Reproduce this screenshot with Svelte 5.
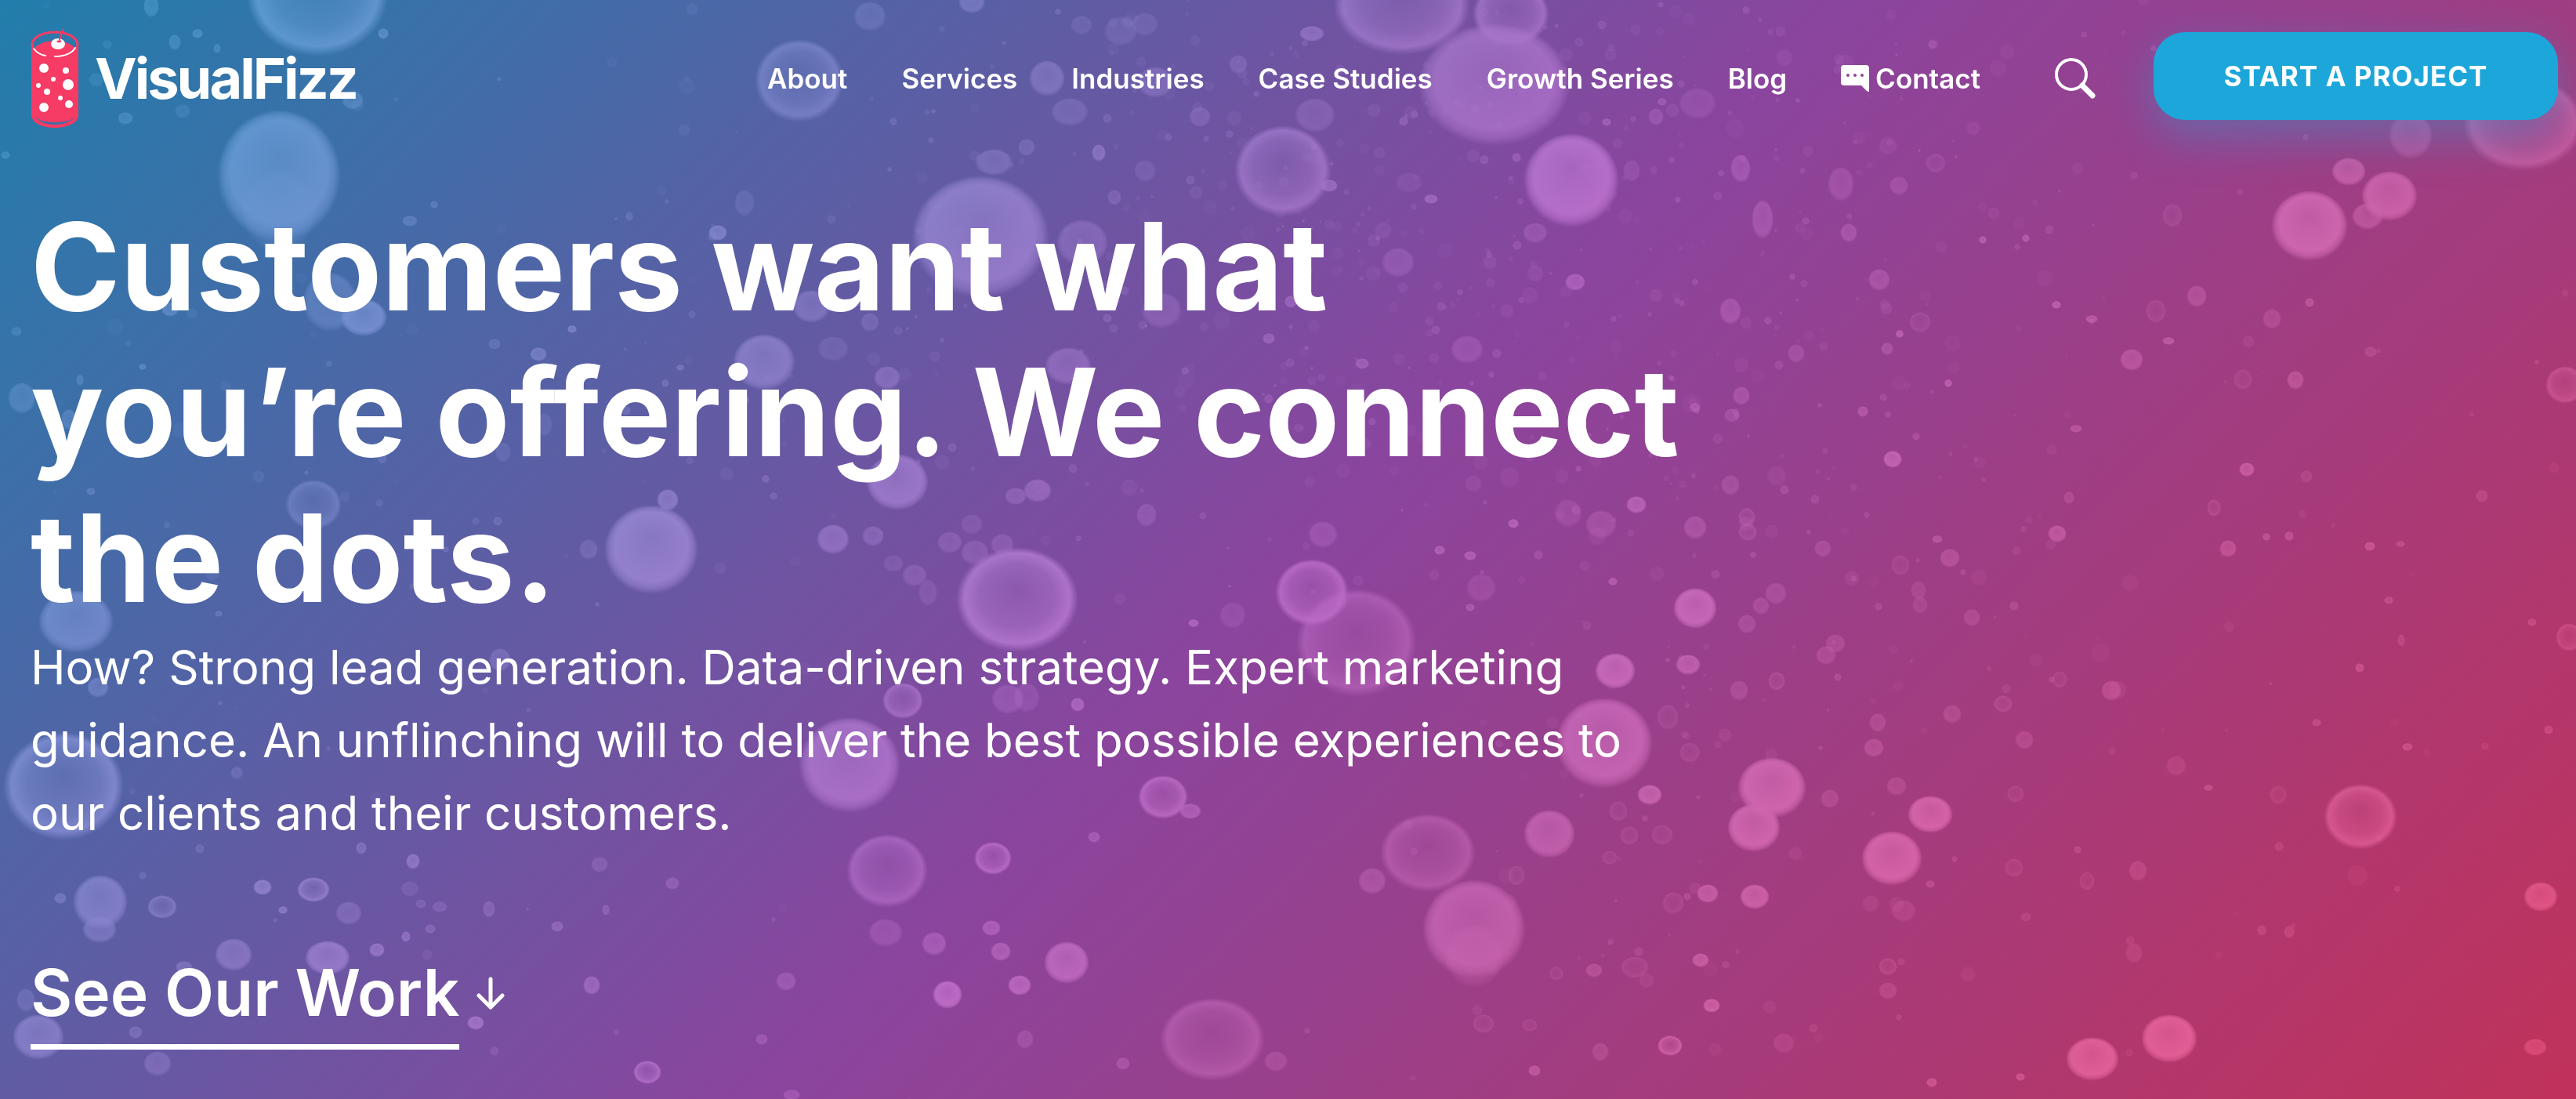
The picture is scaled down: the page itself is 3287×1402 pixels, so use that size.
<script>
    const navItems = ["About", "Services", "Industries", "Case Studies", "Growth Series", "Blog"];

    // x, y, rx, ry, strength
    const solid = [
        [356, 224, 79, 84, 0.9], [356, 270, 48, 52, 0.3], [193, 8, 10, 14, 0.5], [223, 54, 8, 10, 0.5], [252, 43, 7, 6, 0.6],
        [277, 62, 5, 6, 0.5], [160, 151, 10, 8, 0.5], [233, 142, 10, 9, 0.3], [489, 43, 7, 7, 0.7],
        [450, 128, 14, 12, 0.5], [123, 102, 10, 9, 0.3], [137, 57, 6, 6, 0.3], [7, 198, 6, 5, 0.5],
        [421, 385, 35, 38, 0.5], [464, 405, 30, 24, 0.9], [975, 462, 40, 36, 0.8], [1035, 391, 24, 21, 0.6],
        [831, 701, 60, 57, 1], [852, 638, 14, 14, 0.8], [1063, 688, 21, 19, 0.7], [97, 793, 48, 40, 0.8],
        [916, 297, 12, 10, 0.8], [730, 420, 6, 5, 0.8], [687, 452, 11, 9, 0.7], [28, 508, 18, 20, 0.5],
        [631, 439, 8, 7, 0.4], [116, 627, 6, 5, 0.5], [21, 423, 7, 6, 0.4], [868, 469, 5, 4, 0.6],
        [182, 468, 5, 4, 0.6], [102, 485, 5, 7, 0.5], [751, 701, 12, 13, 0.4], [217, 395, 11, 9, 0.6],
        [523, 282, 10, 7, 0.5], [554, 261, 5, 5, 0.5], [642, 577, 10, 13, 0.3], [694, 542, 11, 15, 0.3],
        [88, 535, 10, 13, 0.5], [279, 783, 5, 4, 0.5], [950, 259, 13, 17, 0.3], [1063, 445, 20, 16, 0.3],
        [607, 665, 5, 5, 0.3], [849, 489, 5, 5, 0.5], [977, 611, 5, 5, 0.5], [803, 276, 5, 6, 0.4],
        [1336, 100, 23, 23, 0.6], [1474, 105, 23, 20, 0.5], [1365, 143, 24, 18, 0.4], [1678, 147, 26, 22, 0.4],
        [1907, 108, 97, 78, 0.8], [2005, 230, 61, 60, 1], [1251, 302, 88, 78, 0.9], [1381, 310, 33, 30, 0.5],
        [1110, 21, 21, 19, 0.4], [1268, 207, 24, 17, 0.5], [1363, 467, 30, 24, 0.6], [1784, 335, 21, 19, 0.4],
        [1872, 446, 21, 18, 0.4], [2010, 360, 13, 11, 0.7], [1482, 396, 26, 23, 0.4], [1132, 482, 17, 15, 0.6],
        [1696, 237, 11, 8, 0.7], [1402, 195, 9, 11, 0.7], [1674, 43, 16, 10, 0.7], [1826, 254, 9, 6, 0.7],
        [1738, 464, 9, 7, 0.6], [1240, 3, 17, 14, 0.6], [1380, 32, 14, 12, 0.3], [1430, 40, 21, 19, 0.3],
        [1461, 31, 17, 15, 0.3], [1580, 82, 12, 12, 0.4], [1531, 149, 14, 13, 0.4], [1619, 432, 8, 7, 0.6],
        [1959, 297, 16, 13, 0.4], [1110, 411, 12, 12, 0.4], [2166, 132, 24, 20, 0.3], [2113, 149, 10, 11, 0.4],
        [2082, 218, 11, 14, 0.3], [1798, 233, 17, 13, 0.2], [1422, 252, 9, 10, 0.4], [1310, 188, 11, 11, 0.4],
        [1461, 218, 14, 14, 0.3], [1647, 385, 8, 8, 0.6], [2163, 520, 7, 6, 0.6], [2050, 156, 6, 5, 0.6],
        [1935, 201, 6, 6, 0.5], [1791, 155, 6, 6, 0.5], [2121, 130, 6, 5, 0.5], [1145, 615, 40, 36, 0.9],
        [2163, 776, 28, 26, 1], [2061, 856, 26, 23, 1], [2047, 948, 62, 58, 0.9], [1977, 1064, 33, 31, 0.8],
        [1881, 1185, 66, 63, 0.8], [1881, 1220, 38, 40, 0.3], [1751, 1124, 18, 17, 0.5], [1361, 1228, 29, 27, 0.9],
        [1209, 1269, 19, 18, 1], [1301, 1257, 15, 13, 0.9], [1519, 1035, 14, 10, 0.7], [1130, 1190, 22, 18, 0.4],
        [1192, 1204, 16, 15, 0.6], [1265, 1184, 12, 10, 0.7], [1277, 1214, 13, 12, 0.7], [1286, 892, 21, 19, 0.4],
        [1310, 890, 17, 19, 0.3], [1375, 899, 9, 9, 0.8], [1523, 795, 7, 5, 0.8], [1573, 785, 17, 17, 0.3],
        [1688, 682, 19, 17, 0.4], [1890, 750, 19, 18, 0.3], [2088, 644, 13, 11, 0.8], [2043, 669, 20, 18, 0.4],
        [2001, 655, 18, 18, 0.3], [2163, 673, 15, 15, 0.5], [2105, 1014, 16, 13, 0.9], [2154, 848, 16, 13, 0.8],
        [2179, 1140, 14, 12, 0.8], [2170, 1225, 11, 9, 0.8], [2184, 1283, 11, 9, 0.9], [2042, 1342, 11, 12, 0.4],
        [2034, 1238, 11, 9, 0.5], [1958, 1366, 8, 7, 0.7], [1628, 1354, 15, 13, 0.4], [1433, 1357, 9, 8, 0.5],
        [1308, 1326, 11, 12, 0.4], [1396, 1068, 8, 7, 0.6], [1324, 626, 18, 15, 0.6], [1296, 633, 14, 11, 0.5],
        [1212, 692, 16, 14, 0.4], [1244, 705, 18, 16, 0.4], [1279, 695, 15, 14, 0.4], [1240, 669, 14, 13, 0.3],
        [1114, 684, 14, 13, 0.5], [1167, 734, 16, 14, 0.4], [1184, 756, 12, 17, 0.3], [1463, 657, 13, 15, 0.4],
        [1140, 719, 13, 11, 0.3], [1837, 702, 7, 6, 0.7], [1876, 709, 8, 6, 0.7], [1931, 668, 7, 6, 0.8],
        [2058, 742, 6, 5, 0.7], [1876, 775, 6, 5, 0.6], [128, 1151, 35, 35, 0.8], [127, 1186, 22, 17, 0.6],
        [1084, 976, 65, 61, 0.9], [335, 1132, 12, 10, 0.9], [527, 1099, 9, 10, 0.8], [461, 1082, 7, 8, 0.6],
        [445, 1165, 17, 15, 0.5], [298, 1218, 24, 21, 0.7], [418, 1222, 29, 22, 0.9], [481, 1212, 10, 9, 0.8],
        [49, 1323, 33, 29, 0.8], [33, 1276, 12, 15, 0.4], [201, 1357, 18, 16, 0.5], [173, 1317, 9, 8, 0.5],
        [607, 1305, 11, 9, 0.9], [1003, 1252, 13, 12, 0.5], [755, 1257, 11, 12, 0.7], [711, 1182, 8, 7, 0.6],
        [624, 1160, 8, 11, 0.5], [858, 1127, 9, 8, 0.5], [765, 1103, 11, 10, 0.4], [773, 1161, 5, 7, 0.5],
        [523, 1134, 12, 10, 0.3], [561, 1157, 10, 7, 0.4], [537, 1153, 7, 6, 0.4], [518, 1195, 6, 7, 0.7],
        [549, 1185, 7, 6, 0.5], [361, 1161, 6, 5, 0.8], [77, 1146, 8, 7, 0.6], [125, 877, 14, 13, 0.6],
        [638, 842, 14, 15, 0.5], [235, 1234, 11, 8, 0.6], [972, 1326, 8, 7, 0.5], [1010, 1397, 11, 7, 0.5],
        [302, 986, 8, 8, 0.4], [2947, 288, 49, 45, 1], [3049, 250, 36, 32, 0.9], [2997, 219, 22, 18, 0.8],
        [3021, 276, 20, 17, 0.6], [3076, 173, 28, 30, 0.5], [3242, 1144, 22, 19, 0.8], [3235, 1336, 15, 11, 0.6],
        [2768, 1325, 36, 31, 1], [2670, 1351, 34, 28, 1], [2414, 1095, 39, 35, 1], [2463, 1039, 29, 24, 1],
        [2261, 1005, 44, 39, 1], [2238, 1056, 34, 31, 1], [2239, 1144, 19, 16, 0.9], [2415, 586, 12, 11, 0.9],
        [2625, 681, 12, 11, 0.7], [2803, 378, 13, 14, 0.5], [2720, 459, 15, 14, 0.6], [2929, 485, 11, 12, 0.6],
        [2867, 599, 10, 9, 0.8], [2843, 700, 11, 11, 0.6], [2398, 357, 14, 14, 0.5], [2292, 451, 11, 12, 0.4],
        [2488, 712, 13, 12, 0.5], [2516, 788, 11, 11, 0.4], [2326, 700, 11, 11, 0.4], [2694, 881, 13, 13, 0.5],
        [2777, 977, 13, 13, 0.3], [2583, 944, 12, 12, 0.4], [2491, 911, 12, 12, 0.4], [2396, 922, 11, 12, 0.4],
        [2391, 954, 13, 12, 0.5], [2420, 1003, 13, 12, 0.4], [2335, 1019, 12, 12, 0.4], [2266, 757, 14, 14, 0.4],
        [2247, 773, 11, 11, 0.4], [2229, 796, 12, 12, 0.4], [2342, 821, 13, 12, 0.4], [2330, 836, 13, 12, 0.4],
        [2448, 753, 10, 12, 0.3], [2450, 772, 10, 11, 0.3], [2219, 881, 12, 13, 0.4], [2208, 619, 12, 13, 0.4],
        [2222, 505, 11, 12, 0.5], [2210, 530, 10, 9, 0.4], [2249, 280, 14, 25, 0.5], [2349, 235, 17, 22, 0.4],
        [2359, 297, 11, 12, 0.5], [2423, 237, 12, 12, 0.4], [2221, 215, 13, 18, 0.5], [2208, 397, 14, 17, 0.5],
        [2429, 1162, 16, 14, 0.3], [2409, 1264, 12, 11, 0.4], [2276, 1331, 14, 13, 0.3], [2728, 1111, 12, 13, 0.4],
        [2723, 1216, 11, 13, 0.3], [2899, 407, 12, 13, 0.4], [2624, 389, 6, 5, 0.8], [2669, 407, 8, 5, 0.7],
        [2767, 435, 8, 5, 0.7], [2585, 304, 5, 5, 0.7], [2530, 306, 5, 5, 0.7], [2486, 489, 5, 5, 0.8],
        [2424, 426, 5, 5, 0.8], [2408, 445, 8, 8, 0.5], [2377, 525, 7, 7, 0.6], [2649, 547, 8, 5, 0.6],
        [2640, 635, 7, 8, 0.4], [2472, 688, 7, 5, 0.6], [2818, 1005, 6, 4, 0.6], [3024, 697, 7, 6, 0.7],
        [2921, 684, 6, 6, 0.6], [2892, 685, 5, 5, 0.6], [3063, 694, 6, 4, 0.5], [3011, 852, 6, 6, 0.6],
        [3048, 766, 6, 5, 0.5], [3064, 817, 5, 8, 0.4], [3072, 953, 7, 5, 0.6], [2956, 922, 6, 5, 0.5],
        [3231, 794, 6, 5, 0.5], [3252, 931, 6, 6, 0.5], [3167, 633, 8, 8, 0.4], [3025, 449, 8, 7, 0.4],
        [2947, 386, 6, 6, 0.6], [2921, 1189, 7, 8, 0.4], [2886, 1187, 6, 7, 0.4], [2465, 1381, 7, 6, 0.7],
        [2578, 1374, 6, 5, 0.7], [2463, 1128, 6, 5, 0.5], [2943, 608, 8, 8, 0.3], [2585, 1170, 7, 6, 0.3],
    ];

    const hollow = [
        [405, -6, 90, 78, 0.9], [400, 644, 36, 32, 0.6], [1020, 103, 57, 53, 0.7], [1789, 8, 87, 62, 0.8],
        [1928, 18, 49, 42, 0.8], [1637, 218, 62, 58, 0.8], [1674, 756, 47, 43, 0.9], [1731, 820, 77, 69, 0.6],
        [1298, 765, 78, 67, 1], [1822, 1088, 61, 50, 0.6], [1547, 1326, 67, 53, 0.6], [1267, 1095, 24, 21, 0.9],
        [1484, 1017, 32, 28, 0.9], [1132, 1111, 52, 47, 0.7], [1152, 894, 26, 23, 0.8], [2131, 1334, 16, 13, 0.9],
        [81, 1003, 77, 69, 0.9], [207, 1157, 19, 15, 0.7], [400, 1135, 21, 16, 0.9], [826, 1368, 18, 15, 0.9],
        [3273, 491, 25, 24, 0.6], [3278, 813, 17, 18, 0.5], [3012, 1042, 47, 42, 0.8], [3220, 158, 77, 60, 0.7],
        [2628, 867, 10, 11, 0.3], [2267, 869, 11, 12, 0.4], [2229, 660, 11, 12, 0.4], [2230, 679, 12, 11, 0.4],
        [2470, 208, 13, 12, 0.3], [2450, 411, 14, 13, 0.3], [2409, 1233, 12, 11, 0.4], [2663, 1124, 10, 12, 0.3],
        [2570, 1107, 12, 12, 0.3], [2572, 1013, 11, 11, 0.3], [2907, 1014, 11, 12, 0.3], [2862, 484, 12, 13, 0.3],
        [2751, 397, 13, 15, 0.3], [2772, 275, 13, 15, 0.3], [2825, 648, 9, 11, 0.4], [2556, 898, 12, 11, 0.4],
        [2425, 721, 12, 13, 0.3], [2128, 915, 14, 16, 0.3], [2156, 960, 13, 13, 0.3], [2079, 1066, 12, 12, 0.3],
        [2121, 1065, 14, 13, 0.3], [2065, 1035, 12, 13, 0.3], [2054, 1094, 10, 9, 0.3], [1935, 1117, 11, 13, 0.3],
        [2135, 1152, 14, 14, 0.3], [2086, 1234, 18, 14, 0.3], [1952, 1308, 10, 8, 0.3], [1893, 1306, 14, 12, 0.3],
        [1986, 1242, 9, 9, 0.3],
    ];

    // fine spray, thickest down the middle of the picture
    function spray(count, cx, cy, spreadX, spreadY, seed) {
        let s = seed;
        const rand = () => (s = (s * 16807) % 2147483647) / 2147483647;
        const around = (c, spread) => Math.round(c + (rand() + rand() + rand() - 1.5) * spread);
        return Array.from({ length: count }, () => {
            const r = 2 + Math.round(rand() * rand() * 12);
            return [around(cx, spreadX), around(cy, spreadY), r, r, 0.08 + rand() * (r > 6 ? 0.14 : 0.35)];
        });
    }

    const specks = [
        ...spray(520, 1800, 250, 800, 450, 71),
        ...spray(220, 2150, 750, 450, 900, 1234),
        ...spray(130, 600, 650, 900, 900, 555),
        ...spray(60, 2750, 700, 700, 900, 98),
    ];
</script>

<main class="hero">
    <svg class="bubbles" viewBox="0 0 3287 1402" preserveAspectRatio="xMidYMid slice" aria-hidden="true">
        <defs>
            <radialGradient id="solid" cx="50%" cy="50%" r="50%" fy="35%">
                <stop class="tint" offset="0" stop-opacity="0.75" />
                <stop class="tint" offset="0.78" stop-opacity="1" />
                <stop class="tint" offset="0.9" stop-opacity="0.65" />
                <stop class="tint" offset="1" stop-opacity="0" />
            </radialGradient>
            <radialGradient id="hollow" cx="50%" cy="50%" r="50%" fy="40%">
                <stop class="tint" offset="0" stop-opacity="0.3" />
                <stop class="tint" offset="0.6" stop-opacity="0.6" />
                <stop class="tint" offset="0.86" stop-opacity="1" />
                <stop class="tint" offset="1" stop-opacity="0" />
            </radialGradient>
        </defs>
        {#each [...specks, ...solid] as [x, y, rx, ry, strength]}
            <ellipse cx={x} cy={y} {rx} {ry} fill="url(#solid)" opacity={strength} />
        {/each}
        {#each hollow as [x, y, rx, ry, strength]}
            <ellipse cx={x} cy={y} {rx} {ry} fill="url(#hollow)" opacity={strength} />
        {/each}
    </svg>

    <header>
        <a class="logo" href="#home">
            <svg viewBox="0 0 62 128" aria-hidden="true">
                <path d="M1 20v91c0 9 13 16 30 16s30-7 30-16V20z" fill="#f63b64" />
                <path d="M3 20C3 11 15 4 31 4s28 7 28 16c0 3-1 5-2 6-5-6-14-10-26-10S10 20 4 26z" fill="#2d78a9" />
                <ellipse cx="31" cy="21" rx="29" ry="16" fill="none" stroke="#f63b64" stroke-width="3" />
                <path d="M4 26c6-6 15-10 27-10s21 4 26 10c-6 7-15 10-26 10S9 33 4 26" fill="#f63b64" />
                <path d="M4 26c3 4 9 8 15 9M31 36c12 0 22-4 26-11" fill="none" stroke="#fff" stroke-width="2" stroke-linecap="round" />
                <ellipse cx="35" cy="20" rx="9" ry="7" fill="#fff" />
                <path d="M36 17l6-16M34 16c1 2 3 2 5 0" fill="none" stroke="#f63b64" stroke-width="2" />
                <path d="M5 112c5 7 14 11 26 11s21-4 26-11c-5 6-14 8-26 8s-21-2-26-8z" fill="#3a70aa" />
                <g fill="#fff">
                    <circle cx="17" cy="51" r="6" /><circle cx="45" cy="54" r="4" /><circle cx="29" cy="65" r="3" />
                    <circle cx="10" cy="73" r="3" /><circle cx="48" cy="72" r="7" /><circle cx="21" cy="81" r="4" />
                    <circle cx="38" cy="89" r="3" /><circle cx="17" cy="101" r="6" /><circle cx="49" cy="97" r="5" />
                </g>
            </svg>
            <span>VisualFizz</span>
        </a>

        <nav>
            {#each navItems as item}
                <a href="#{item.toLowerCase().replace(' ', '-')}">{item}</a>
            {/each}
            <a class="contact" href="#contact">
                <svg viewBox="0 0 36 36" aria-hidden="true">
                    <path d="M4 1h28a4 4 0 0 1 4 4v30q-2 0-3-1l-7-7H4a4 4 0 0 1-4-4V5a4 4 0 0 1 4-4z" fill="#fff" />
                    <g fill="#8f4497"><circle cx="9" cy="14" r="2" /><circle cx="18" cy="14" r="2" /><circle cx="27" cy="14" r="2" /></g>
                </svg>
                Contact
            </a>
        </nav>

        <button class="search" aria-label="Search">
            <svg viewBox="0 0 52 52" aria-hidden="true">
                <circle cx="21" cy="21" r="19" />
                <path d="M35 35l13 13" />
            </svg>
        </button>
        <a class="start" href="#start">START A PROJECT</a>
    </header>

    <section>
        <h1>Customers want what you’re offering. We connect the dots.</h1>
        <p>
            How? Strong lead generation. Data-driven strategy. Expert marketing guidance. An unflinching will
            to deliver the best possible experiences to our clients and their customers.
        </p>
        <a class="work" href="#work">
            <span>See Our Work</span>
            <svg viewBox="0 0 36 42" aria-hidden="true"><path d="M18 3v36M3 24l15 15 15-15" /></svg>
        </a>
    </section>
</main>

<style>
    :global(body) {
        margin: 0;
    }

    .hero {
        position: relative;
        isolation: isolate;
        overflow: hidden;
        min-height: 100vh;
        box-sizing: border-box;
        color: #fff;
        font-family: Inter, "Liberation Sans", sans-serif;
        background: linear-gradient(135deg, #217eac, #8a459e 50%, #c0325a);
    }

    .bubbles {
        position: absolute;
        inset: 0;
        z-index: -1;
        width: 100%;
        height: 100%;
        mix-blend-mode: plus-lighter;
    }

    .tint {
        stop-color: rgb(46, 39, 42);
    }

    a {
        color: inherit;
        text-decoration: none;
    }

    header {
        display: flex;
        align-items: center;
        padding: 36px 23px 0 39px;
    }

    .logo {
        display: flex;
        align-items: center;
        gap: 20px;
        font-size: 72px;
        line-height: 88px;
        font-weight: 700;
        letter-spacing: -3px;
    }

    .logo svg {
        width: 62px;
        height: 128px;
    }

    nav {
        display: flex;
        gap: 69px;
        margin-left: auto;
        font-size: 35px;
        line-height: 42px;
        font-weight: 600;
    }

    .contact {
        display: flex;
        align-items: center;
        gap: 8px;
    }

    .contact svg {
        width: 36px;
        height: 36px;
    }

    .search {
        margin: 0 74px 0 95px;
        padding: 0;
        border: 0;
        background: none;
    }

    .search svg {
        display: block;
        width: 52px;
        height: 52px;
        fill: none;
        stroke: #fff;
        stroke-width: 4;
        stroke-linecap: round;
    }

    .search path {
        stroke-width: 7;
    }

    .start {
        box-sizing: border-box;
        width: 516px;
        margin-bottom: 6px;
        border-radius: 40px;
        font-size: 35px;
        line-height: 112px;
        font-weight: 700;
        letter-spacing: 1px;
        text-align: center;
        background: #1da6da;
        box-shadow: 0 20px 60px rgba(29, 166, 218, 0.4);
    }

    section {
        max-width: 2120px;
        padding: 83px 39px 0;
    }

    h1 {
        margin: 0;
        font-size: 155px;
        line-height: 186px;
        font-weight: 700;
    }

    p {
        margin: 0;
        font-size: 60px;
        line-height: 93px;
    }

    .work {
        display: flex;
        align-items: flex-start;
        gap: 22px;
        margin-top: 133px;
        font-size: 82px;
        line-height: 100px;
        font-weight: 600;
    }

    .work span {
        padding-bottom: 15px;
        border-bottom: 7px solid #fff;
    }

    .work svg {
        width: 36px;
        height: 100px;
        fill: none;
        stroke: #fff;
        stroke-width: 5;
        stroke-linecap: round;
        stroke-linejoin: round;
    }
</style>
